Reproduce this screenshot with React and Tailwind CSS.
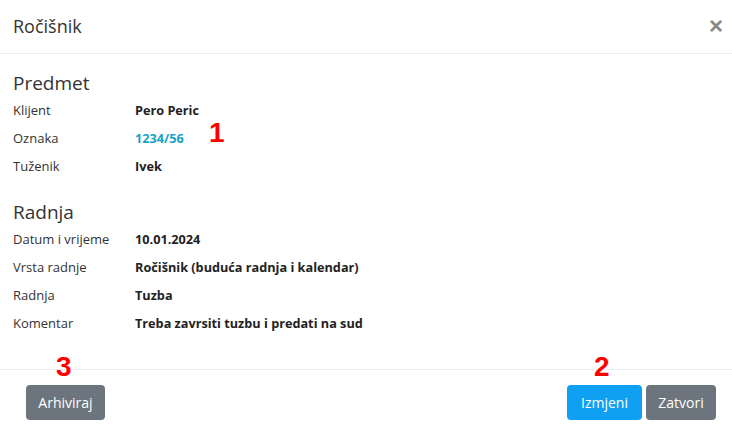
import React from 'react';

const predmet = [
  { label: 'Klijent', value: 'Pero Peric' },
  { label: 'Oznaka', value: '1234/56', link: true },
  { label: 'Tuženik', value: 'Ivek' },
];

const radnja = [
  { label: 'Datum i vrijeme', value: '10.01.2024' },
  { label: 'Vrsta radnje', value: 'Ročišnik (buduća radnja i kalendar)' },
  { label: 'Radnja', value: 'Tuzba' },
  { label: 'Komentar', value: 'Treba zavrsiti tuzbu i predati na sud' },
];

const Row = ({ label, value, link }) => (
  <div className="flex items-center h-[28px]">
    <span className="w-[122px] text-[13px] text-[#333]">{label}</span>
    <span className={link ? 'text-[12.7px] font-bold text-[#17a2c8]' : 'text-[12.7px] font-bold text-[#222]'}>
      {value}
    </span>
  </div>
);

// red numbered markers painted over the screenshot
const Marker = ({ children, className }) => (
  <span
    className={`absolute text-[28px] leading-none font-bold text-[#ff0000] ${className}`}
    style={{ fontFamily: '"Liberation Sans", Arial, sans-serif' }}
  >
    {children}
  </span>
);

export default function App() {
  return (
    <div
      className="relative w-[732px] h-[432px] bg-white overflow-hidden text-[#212529]"
      style={{ fontFamily: '"Open Sans", "Noto Sans", sans-serif' }}
    >
      {/* Header */}
      <div className="flex items-center justify-between h-[54px] px-[13px] border-b border-[#e9ecef]">
        <h1 className="text-[18px] text-[#333]">Ročišnik</h1>
        <button
          className="text-[#888] text-[24px] font-bold leading-none mr-[-4px] mt-[-1px]"
          style={{ fontFamily: '"Liberation Sans", Arial, sans-serif' }}
        >
          ×
        </button>
      </div>

      {/* Body */}
      <div className="px-[13px] pt-[15px] h-[316px] border-b border-[#e9ecef]">
        <h2 className="text-[19px] text-[#333] leading-[28px]">Predmet</h2>
        {predmet.map((r) => (
          <Row key={r.label} {...r} />
        ))}
        <h2 className="text-[19px] text-[#333] leading-[28px] mt-[17px]">Radnja</h2>
        {radnja.map((r) => (
          <Row key={r.label} {...r} />
        ))}
      </div>

      {/* Footer */}
      <div className="flex items-center justify-between pr-[16px] pl-[26px] pt-[15px]">
        <button className="h-[35px] w-[79px] rounded-[4px] bg-[#6c757d] text-white text-[14px]">Arhiviraj</button>
        <div className="flex gap-[4px]">
          <button className="h-[35px] w-[75px] rounded-[4px] bg-[#0fa0f2] text-white text-[14px]">Izmjeni</button>
          <button className="h-[35px] w-[70px] rounded-[4px] bg-[#6c757d] text-white text-[14px]">Zatvori</button>
        </div>
      </div>

      <Marker className="left-[209px] top-[119px]">1</Marker>
      <Marker className="left-[56px] top-[353px]">3</Marker>
      <Marker className="left-[594px] top-[353px]">2</Marker>
    </div>
  );
}
